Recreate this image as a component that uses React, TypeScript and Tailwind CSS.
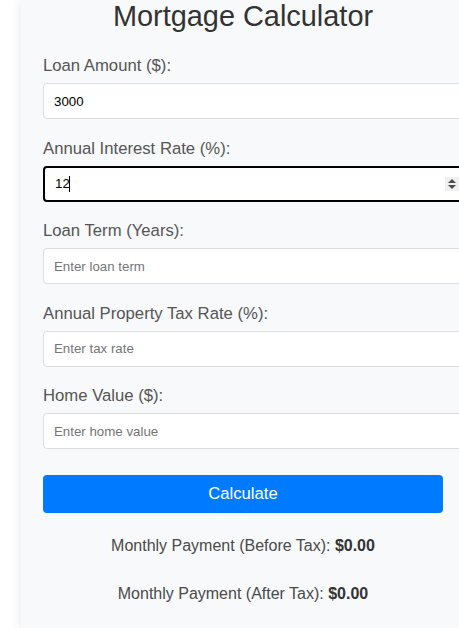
import React, { useState } from "react";

const font = { fontFamily: '"Liberation Sans", Arial, sans-serif' };

type Field = { id: string; label: string; placeholder: string; value?: string; focused?: boolean };

const fields: Field[] = [
  { id: "amount", label: "Loan Amount ($):", placeholder: "Enter loan amount", value: "3000" },
  { id: "rate", label: "Annual Interest Rate (%):", placeholder: "Enter interest rate", value: "12", focused: true },
  { id: "term", label: "Loan Term (Years):", placeholder: "Enter loan term" },
  { id: "tax", label: "Annual Property Tax Rate (%):", placeholder: "Enter tax rate" },
  { id: "home", label: "Home Value ($):", placeholder: "Enter home value" },
];

function Spinner() {
  return (
    <span className="absolute right-[6px] top-1/2 -translate-y-1/2 flex h-[14px] w-[14px] items-center justify-center bg-[#efefef]">
      <svg width="8" height="10" viewBox="0 0 8 10" fill="#4a4a4a">
        <path d="M4 0 L8 4 L0 4 Z" />
        <path d="M0 6 L8 6 L4 10 Z" />
      </svg>
    </span>
  );
}

export default function App() {
  const [values, setValues] = useState<Record<string, string>>(
    Object.fromEntries(fields.map((f) => [f.id, f.value ?? ""]))
  );

  return (
    <div className="min-h-screen w-full overflow-hidden bg-white" style={font}>
      <div className="ml-[21px] min-h-screen w-[444px] bg-[#f8f9fa] px-[22px] pb-[30px] shadow-[0_0_10px_rgba(0,0,0,0.1)]">
        <h1 className="text-center text-[28.9px] leading-[33px] text-[#333]">Mortgage Calculator</h1>

        <div className="mt-[23px] flex flex-col gap-[19.5px]">
          {fields.map((f) => (
            <div key={f.id} className="flex flex-col">
              <label htmlFor={f.id} className="mb-[8px] text-[16.7px] leading-[19px] text-[#555]">
                {f.label}
              </label>
              <div className="relative w-[422px]">
                <input
                  id={f.id}
                  type="text"
                  value={values[f.id]}
                  placeholder={f.placeholder}
                  onChange={(e) => setValues({ ...values, [f.id]: e.target.value })}
                  className={
                    f.focused
                      ? "h-[36px] w-full rounded-[4px] border-2 border-black bg-white px-[10px] text-[13.3px] text-black outline-none"
                      : "h-[36px] w-full rounded-[4px] border border-[#ddd] bg-white px-[10px] text-[13.3px] text-black outline-none placeholder:text-[#757575]"
                  }
                  style={font}
                />
                {f.focused && (
                  <>
                    <span className="absolute left-[26px] top-1/2 h-[16px] w-px -translate-y-1/2 bg-black" />
                    <Spinner />
                  </>
                )}
              </div>
            </div>
          ))}
        </div>

        <button
          type="button"
          className="mt-[26px] h-[38px] w-full rounded-[4px] bg-[#007bff] text-[16.7px] text-white"
          style={font}
        >
          Calculate
        </button>

        <div className="mt-[23px] flex flex-col gap-[28.5px] text-center text-[16px] leading-[19px] text-[#4a4a4a]">
          <p>
            Monthly Payment (Before Tax): <strong className="text-[#333]">$0.00</strong>
          </p>
          <p>
            Monthly Payment (After Tax): <strong className="text-[#333]">$0.00</strong>
          </p>
        </div>
      </div>
    </div>
  );
}
